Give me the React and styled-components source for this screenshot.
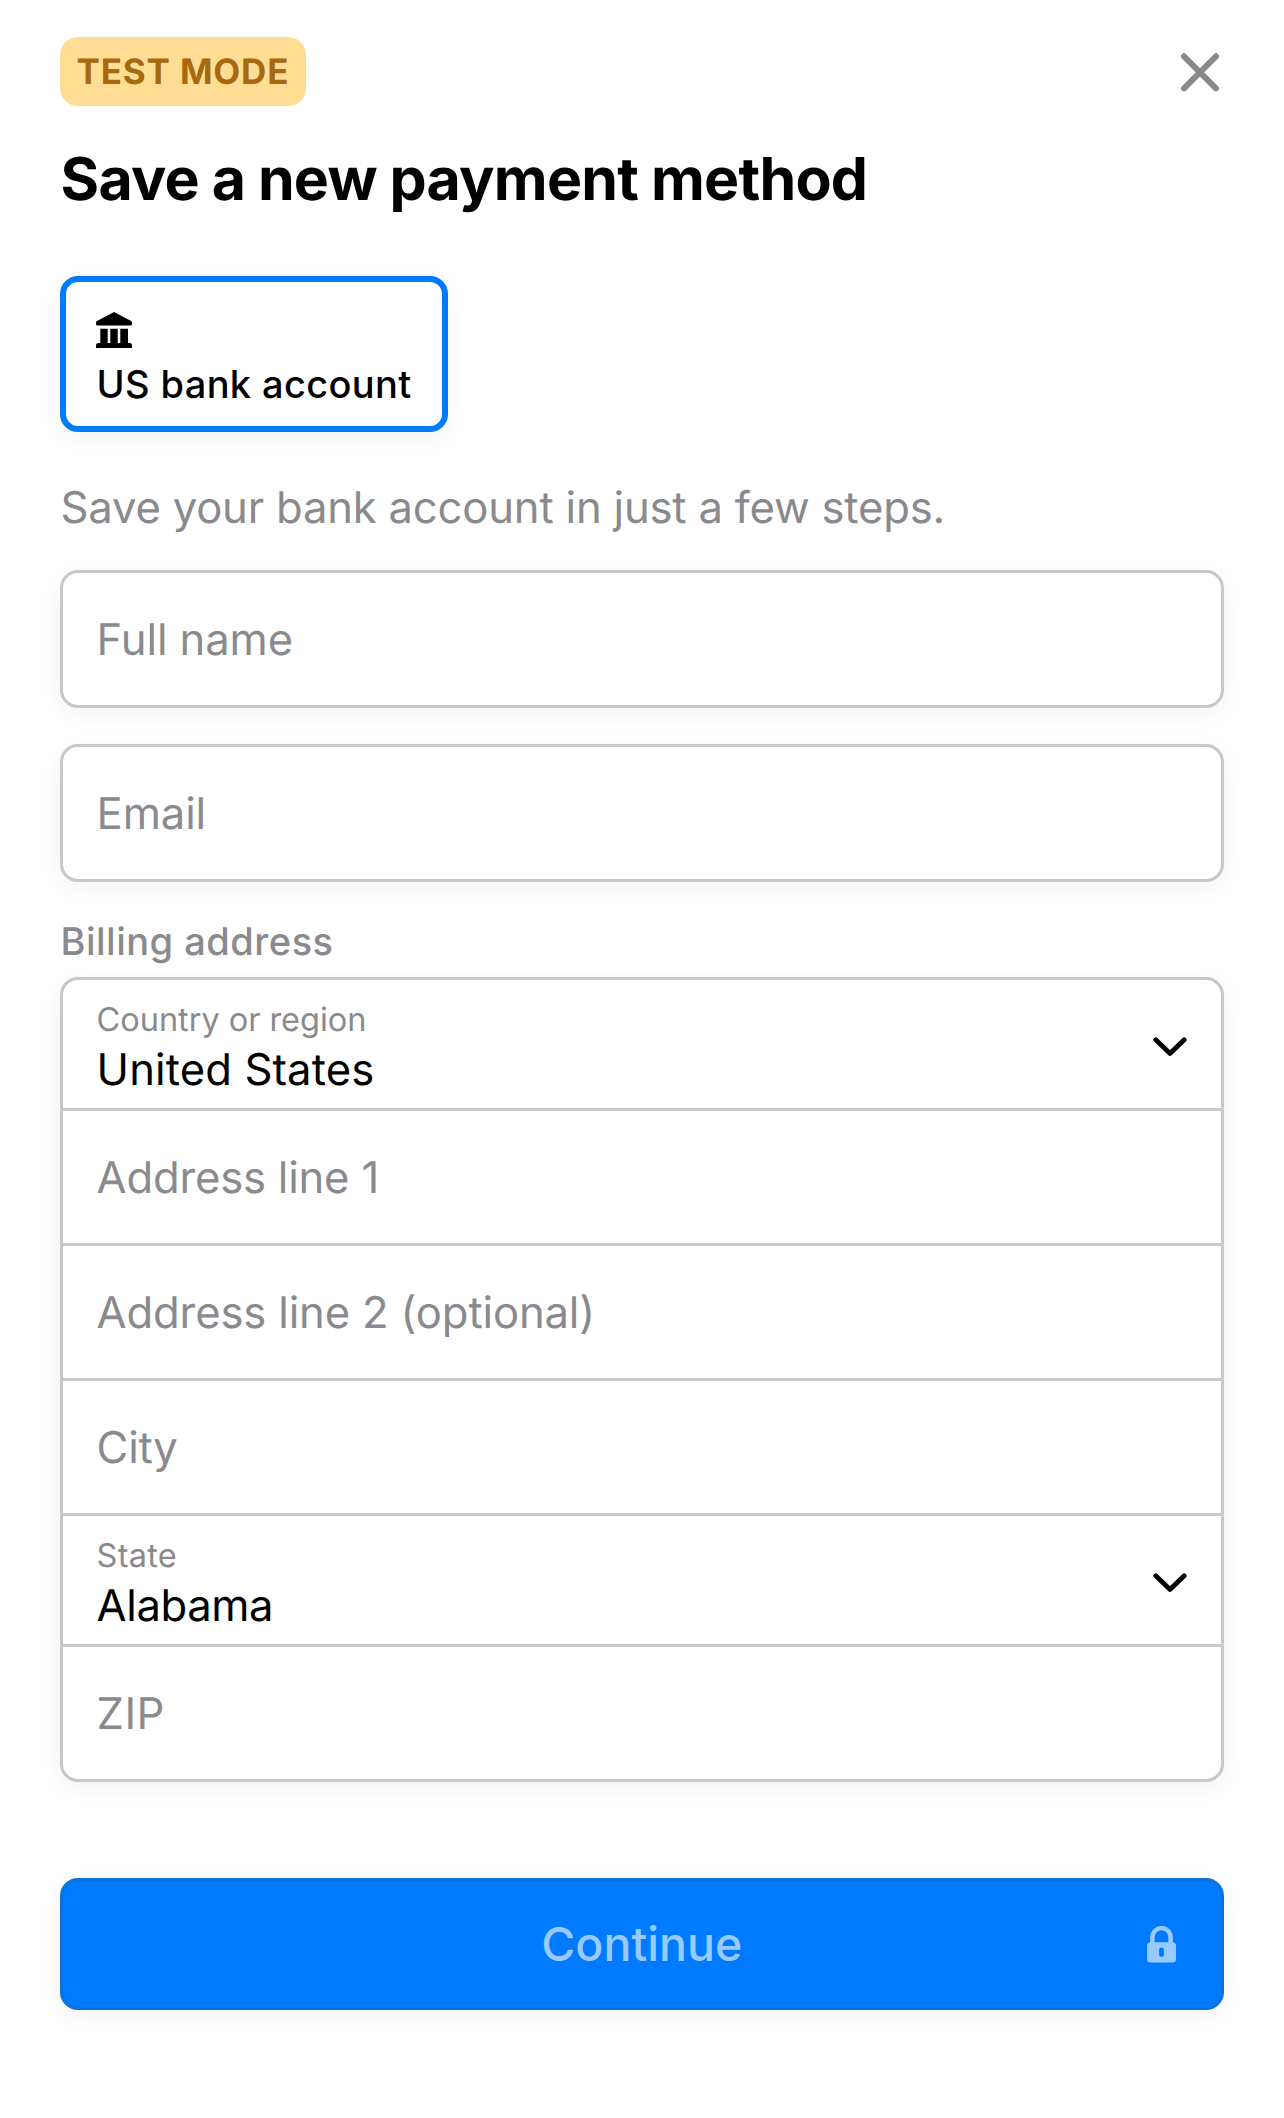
import React from "react";
import styled, { createGlobalStyle } from "styled-components";

const GlobalStyle = createGlobalStyle`
  * { box-sizing: border-box; }
  body {
    margin: 0;
    background: #ffffff;
    font-family: "Inter", "Liberation Sans", sans-serif;
    text-rendering: geometricPrecision;
  }
`;

const blue = "#007aff";
const gray = "#8a8a8e";
const line = "#c7c7cc";
const shadow = "0 6px 24px rgba(0, 0, 0, 0.05)";

const Sheet = styled.main`
  display: flex;
  flex-direction: column;
  min-height: 2118px;
  padding: 37px 60px 0;
`;

const Header = styled.header`
  display: flex;
  align-items: center;
  justify-content: space-between;
  height: 69px;
`;

const Badge = styled.span`
  display: flex;
  align-items: center;
  width: 246px;
  height: 69px;
  padding-left: 16.6px;
  border-radius: 18px;
  background: #ffde94;
  color: #a7680f;
  font-size: 35px;
  font-weight: 700;
  letter-spacing: 0.82px;
  white-space: nowrap;
`;

const CloseButton = styled.button`
  display: flex;
  padding: 0;
  border: 0;
  background: none;
`;

const Title = styled.h1`
  margin: 39px 0 61px;
  padding-left: 0.6px;
  font-size: 59px;
  line-height: 70px;
  font-weight: 700;
  letter-spacing: -0.75px;
  word-spacing: -0.5px;
  color: #000;
`;

const MethodTab = styled.button`
  display: flex;
  flex-direction: column;
  align-items: flex-start;
  width: 388px;
  height: 156px;
  padding: 30px 30px 0;
  border: 6px solid ${blue};
  border-radius: 18px;
  background: #fff;
  box-shadow: ${shadow};
  font-family: inherit;
`;

const MethodName = styled.span`
  margin-top: 13px;
  padding-left: 0.6px;
  font-size: 38px;
  line-height: 46px;
  font-weight: 500;
  letter-spacing: 0.36px;
  color: #000;
  white-space: nowrap;
`;

const Description = styled.p`
  margin: 49px 0 35px;
  padding-left: 0.5px;
  font-size: 43.6px;
  line-height: 54px;
  letter-spacing: -0.19px;
  color: ${gray};
`;

const Fields = styled.div`
  display: flex;
  flex-direction: column;
  gap: 36px;
`;

const Group = styled.div`
  display: flex;
  flex-direction: column;
  border: 3px solid ${line};
  border-radius: 18px;
  background: #fff;
  box-shadow: ${shadow};
`;

const Row = styled.div`
  display: flex;
  align-items: center;
  justify-content: space-between;
  height: ${(p) => (p.$select ? 128 : 132)}px;
  box-sizing: content-box;
  padding: 0 34px 0 33.6px;
  border-bottom: 3px solid ${line};

  &:last-child {
    border-bottom: 0;
  }
`;

const Text = styled.span`
  font-size: 43.6px;
  line-height: 52px;
  letter-spacing: ${(p) => p.$track || 0}px;
  color: ${(p) => (p.$filled ? "#000" : gray)};
`;

const Placeholder = styled(Text)`
  padding-top: 2px;
`;

const Stack = styled.div`
  display: flex;
  flex-direction: column;
  gap: 4px;
  padding-top: 8px;
`;

const Caption = styled.span`
  font-size: 32.5px;
  line-height: 40px;
  letter-spacing: ${(p) => p.$track || 0}px;
  color: ${gray};
`;

const SectionLabel = styled.h2`
  margin: 38px 0 12px;
  padding-left: 0.5px;
  font-size: 38px;
  line-height: 45px;
  font-weight: 500;
  letter-spacing: 0.5px;
  color: ${gray};
`;

const Submit = styled.button`
  display: grid;
  grid-template-columns: 1fr auto 1fr;
  align-items: center;
  height: 132px;
  margin-top: 96px;
  padding: 0 45px;
  border: 3px solid #0c71dd;
  border-radius: 18px;
  background: ${blue};
  box-shadow: ${shadow};
  color: #99caff;
  font-family: inherit;
  font-size: 46.5px;
  font-weight: 500;
`;

const SubmitLabel = styled.span`
  grid-column: 2;
  padding-right: 0.5px;
`;

const LockIcon = styled.svg`
  justify-self: end;
`;

const ChevronIcon = styled.svg`
  margin: 5px 0 0;
`;

function Chevron() {
  return (
    <ChevronIcon width="36" height="20" viewBox="0 0 36 20" fill="none">
      <path d="M4.8 2.8 L19 16.4 L33.2 2.8" stroke="#000" strokeWidth="4.8" strokeLinecap="round" strokeLinejoin="round" />
    </ChevronIcon>
  );
}

function Field({ text, track }) {
  return (
    <Row>
      <Placeholder $track={track}>{text}</Placeholder>
    </Row>
  );
}

function SelectField({ label, labelTrack, value, track }) {
  return (
    <Row $select>
      <Stack>
        <Caption $track={labelTrack}>{label}</Caption>
        <Text $filled $track={track}>{value}</Text>
      </Stack>
      <Chevron />
    </Row>
  );
}

export default function App() {
  return (
    <>
      <GlobalStyle />
      <Sheet>
        <Header>
          <Badge>TEST MODE</Badge>
          <CloseButton aria-label="Close">
            <svg width="48" height="48" viewBox="0 0 48 48" fill="none">
              <path d="M8 8.3 L40 40.3 M40 8.3 L8 40.3" stroke={gray} strokeWidth="6" strokeLinecap="round" />
            </svg>
          </CloseButton>
        </Header>

        <Title>Save a new payment method</Title>

        <MethodTab>
          <svg width="36" height="36" viewBox="0 0 36 36">
            <path d="M18 0 L35 9 Q36 9.6 36 10.6 V12 Q36 13.5 34.3 13.5 H1.7 Q0 13.5 0 12 V10.6 Q0 9.6 1 9 Z" />
            <path d="M4.3 16.7 H11.7 V31 H14.3 V16.7 H21.7 V31 H24.3 V16.7 H32 V31 H34 Q36 31.2 36 33.4 V36 H0 V33.4 Q0 31.2 2 31 H4.3 Z" />
          </svg>
          <MethodName>US bank account</MethodName>
        </MethodTab>

        <Description>Save your bank account in just a few steps.</Description>

        <Fields>
          <Group>
            <Field text="Full name" track={-0.1} />
          </Group>
          <Group>
            <Field text="Email" track={-0.1} />
          </Group>
        </Fields>

        <SectionLabel>Billing address</SectionLabel>
        <Group>
          <SelectField label="Country or region" labelTrack={-0.04} value="United States" track={0.12} />
          <Field text="Address line 1" track={-0.2} />
          <Field text="Address line 2 (optional)" track={-0.15} />
          <Field text="City" track={-0.3} />
          <SelectField label="State" labelTrack={0.25} value="Alabama" track={-0.42} />
          <Field text="ZIP" track={0.4} />
        </Group>

        <Submit>
          <SubmitLabel>Continue</SubmitLabel>
          <LockIcon width="29" height="37" viewBox="0 0 29 37">
            <path d="M5.4 18 V11.2 A9.1 9.1 0 0 1 23.6 11.2 V18" fill="none" stroke="#99caff" strokeWidth="4.5" />
            <path
              fillRule="evenodd"
              fill="#99caff"
              d="M3.5 16.3 H25.5 Q29 16.3 29 19.8 V33 Q29 36.5 25.5 36.5 H3.5 Q0 36.5 0 33 V19.8 Q0 16.3 3.5 16.3 Z M14.5 21.5 A2.4 2.4 0 0 0 12.1 23.9 V28.6 A2.4 2.4 0 0 0 16.9 28.6 V23.9 A2.4 2.4 0 0 0 14.5 21.5 Z"
            />
          </LockIcon>
        </Submit>
      </Sheet>
    </>
  );
}
